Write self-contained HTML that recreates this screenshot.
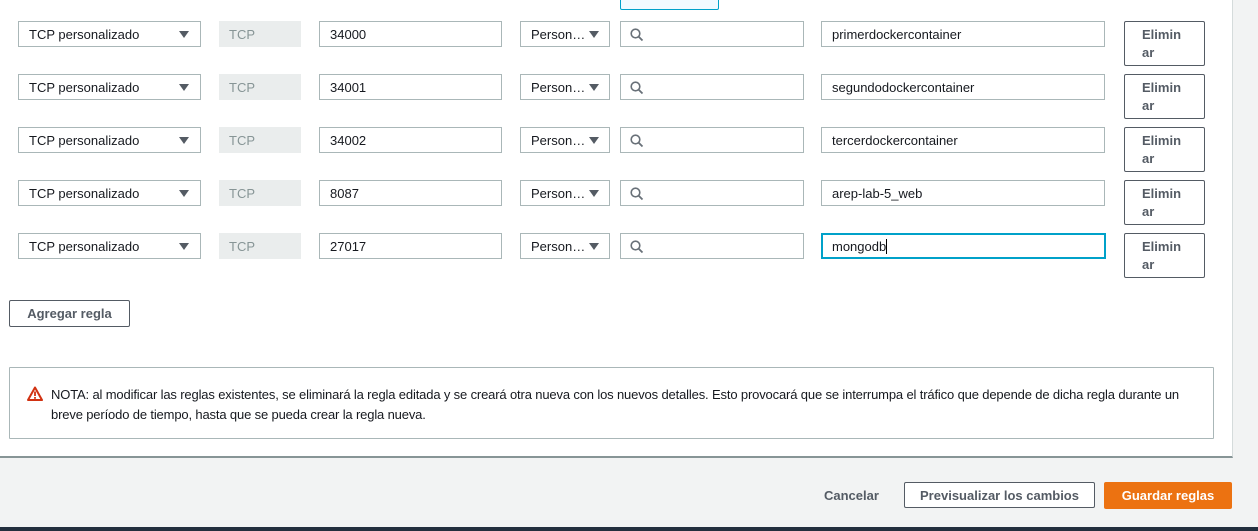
<!DOCTYPE html>
<html><head><meta charset="utf-8"><style>
*{box-sizing:border-box;margin:0;padding:0}
body{width:1258px;height:531px;overflow:hidden;background:#f2f3f3;font-family:"Liberation Sans",sans-serif;font-size:13px;color:#16191f;position:relative}
.panel{position:absolute;left:0;top:0;width:1233px;height:458px;background:#fff;border-right:1px solid #d5dbdb;border-bottom:2px solid #879596}
.a{position:absolute}
.box{position:absolute;height:26px;border:1px solid #aab7b8;background:#fff;line-height:26px;padding-left:10px;white-space:nowrap}
.tri{position:absolute;width:0;height:0;border-left:5px solid transparent;border-right:5px solid transparent;border-top:7px solid #545b64;top:9px}
.tcp{position:absolute;height:26px;background:#eaeded;color:#879596;line-height:28px;padding-left:10px;width:82px;left:219px}
.del{position:absolute;left:1124px;width:81px;height:45px;border:1px solid #545b64;border-radius:2px;background:#fff;font-weight:bold;color:#545b64;padding:4px 0 0 17px;line-height:18px}
.btn{position:absolute;border-radius:2px;font-weight:bold;text-align:center}
svg.s{position:absolute;left:9px;top:6px}
</style></head><body>
<div class="panel"></div>
<div class="a" style="left:620px;top:-2px;width:99px;height:12px;border:1px solid #00a1c9;background:#f1faff;border-radius:2px"></div>

<div class="box" style="left:18px;top:21px;width:183px">TCP personalizado<span class="tri" style="left:160px"></span></div>
<div class="tcp" style="top:21px">TCP</div>
<div class="box" style="left:319px;top:21px;width:183px">34000</div>
<div class="box" style="left:520px;top:21px;width:90px">Person…<span class="tri" style="left:68px"></span></div>
<div class="box" style="left:620px;top:21px;width:184px"><svg class="s" width="14" height="14"><circle cx="5.5" cy="5.5" r="4.3" fill="none" stroke="#687078" stroke-width="1.6"/><path d="M8.6 8.6L12.5 12.5" stroke="#687078" stroke-width="1.8"/></svg></div>
<div class="box" style="left:821px;top:21px;width:284px">primerdockercontainer</div>
<div class="del" style="top:21px">Elimin<br>ar</div>

<div class="box" style="left:18px;top:74px;width:183px">TCP personalizado<span class="tri" style="left:160px"></span></div>
<div class="tcp" style="top:74px">TCP</div>
<div class="box" style="left:319px;top:74px;width:183px">34001</div>
<div class="box" style="left:520px;top:74px;width:90px">Person…<span class="tri" style="left:68px"></span></div>
<div class="box" style="left:620px;top:74px;width:184px"><svg class="s" width="14" height="14"><circle cx="5.5" cy="5.5" r="4.3" fill="none" stroke="#687078" stroke-width="1.6"/><path d="M8.6 8.6L12.5 12.5" stroke="#687078" stroke-width="1.8"/></svg></div>
<div class="box" style="left:821px;top:74px;width:284px">segundodockercontainer</div>
<div class="del" style="top:74px">Elimin<br>ar</div>

<div class="box" style="left:18px;top:127px;width:183px">TCP personalizado<span class="tri" style="left:160px"></span></div>
<div class="tcp" style="top:127px">TCP</div>
<div class="box" style="left:319px;top:127px;width:183px">34002</div>
<div class="box" style="left:520px;top:127px;width:90px">Person…<span class="tri" style="left:68px"></span></div>
<div class="box" style="left:620px;top:127px;width:184px"><svg class="s" width="14" height="14"><circle cx="5.5" cy="5.5" r="4.3" fill="none" stroke="#687078" stroke-width="1.6"/><path d="M8.6 8.6L12.5 12.5" stroke="#687078" stroke-width="1.8"/></svg></div>
<div class="box" style="left:821px;top:127px;width:284px">tercerdockercontainer</div>
<div class="del" style="top:127px">Elimin<br>ar</div>

<div class="box" style="left:18px;top:180px;width:183px">TCP personalizado<span class="tri" style="left:160px"></span></div>
<div class="tcp" style="top:180px">TCP</div>
<div class="box" style="left:319px;top:180px;width:183px">8087</div>
<div class="box" style="left:520px;top:180px;width:90px">Person…<span class="tri" style="left:68px"></span></div>
<div class="box" style="left:620px;top:180px;width:184px"><svg class="s" width="14" height="14"><circle cx="5.5" cy="5.5" r="4.3" fill="none" stroke="#687078" stroke-width="1.6"/><path d="M8.6 8.6L12.5 12.5" stroke="#687078" stroke-width="1.8"/></svg></div>
<div class="box" style="left:821px;top:180px;width:284px">arep-lab-5_web</div>
<div class="del" style="top:180px">Elimin<br>ar</div>

<div class="box" style="left:18px;top:233px;width:183px">TCP personalizado<span class="tri" style="left:160px"></span></div>
<div class="tcp" style="top:233px">TCP</div>
<div class="box" style="left:319px;top:233px;width:183px">27017</div>
<div class="box" style="left:520px;top:233px;width:90px">Person…<span class="tri" style="left:68px"></span></div>
<div class="box" style="left:620px;top:233px;width:184px"><svg class="s" width="14" height="14"><circle cx="5.5" cy="5.5" r="4.3" fill="none" stroke="#687078" stroke-width="1.6"/><path d="M8.6 8.6L12.5 12.5" stroke="#687078" stroke-width="1.8"/></svg></div>
<div class="box" style="left:821px;top:233px;width:285px;border:2px solid #00a1c9;padding-left:9px;line-height:24px">mongodb<span style="display:inline-block;width:1px;height:15px;background:#000;vertical-align:-3px"></span></div>
<div class="del" style="top:233px">Elimin<br>ar</div>

<div class="btn" style="left:9px;top:300px;width:121px;height:27px;border:1px solid #545b64;color:#545b64;line-height:25px">Agregar regla</div>

<div class="a" style="left:9px;top:367px;width:1205px;height:72px;border:1px solid #aab7b8;border-radius:1px"></div>
<svg class="a" style="left:27px;top:386px" width="16" height="15"><path d="M8 1.5L15 14H1Z" fill="none" stroke="#d13212" stroke-width="2" stroke-linejoin="round"/><rect x="7.1" y="5.5" width="1.8" height="4.5" fill="#d13212"/><rect x="7.1" y="11" width="1.8" height="1.8" fill="#d13212"/></svg>
<div class="a" style="left:51px;top:385px;width:1160px;line-height:20px;font-size:13px;letter-spacing:-0.15px">NOTA: al modificar las reglas existentes, se eliminará la regla editada y se creará otra nueva con los nuevos detalles. Esto provocará que se interrumpa el tráfico que depende de dicha regla durante un breve período de tiempo, hasta que se pueda crear la regla nueva.</div>

<div class="a" style="left:824px;top:488px;font-weight:bold;color:#545b64">Cancelar</div>
<div class="btn" style="left:904px;top:482px;width:191px;height:26px;border:1px solid #545b64;background:#fff;color:#545b64;line-height:25px">Previsualizar los cambios</div>
<div class="btn" style="left:1104px;top:482px;width:128px;height:27px;background:#ec7211;color:#fff;line-height:28px">Guardar reglas</div>

<div class="a" style="left:0;top:527px;width:1258px;height:4px;background:#232f3e"></div>
</body></html>
